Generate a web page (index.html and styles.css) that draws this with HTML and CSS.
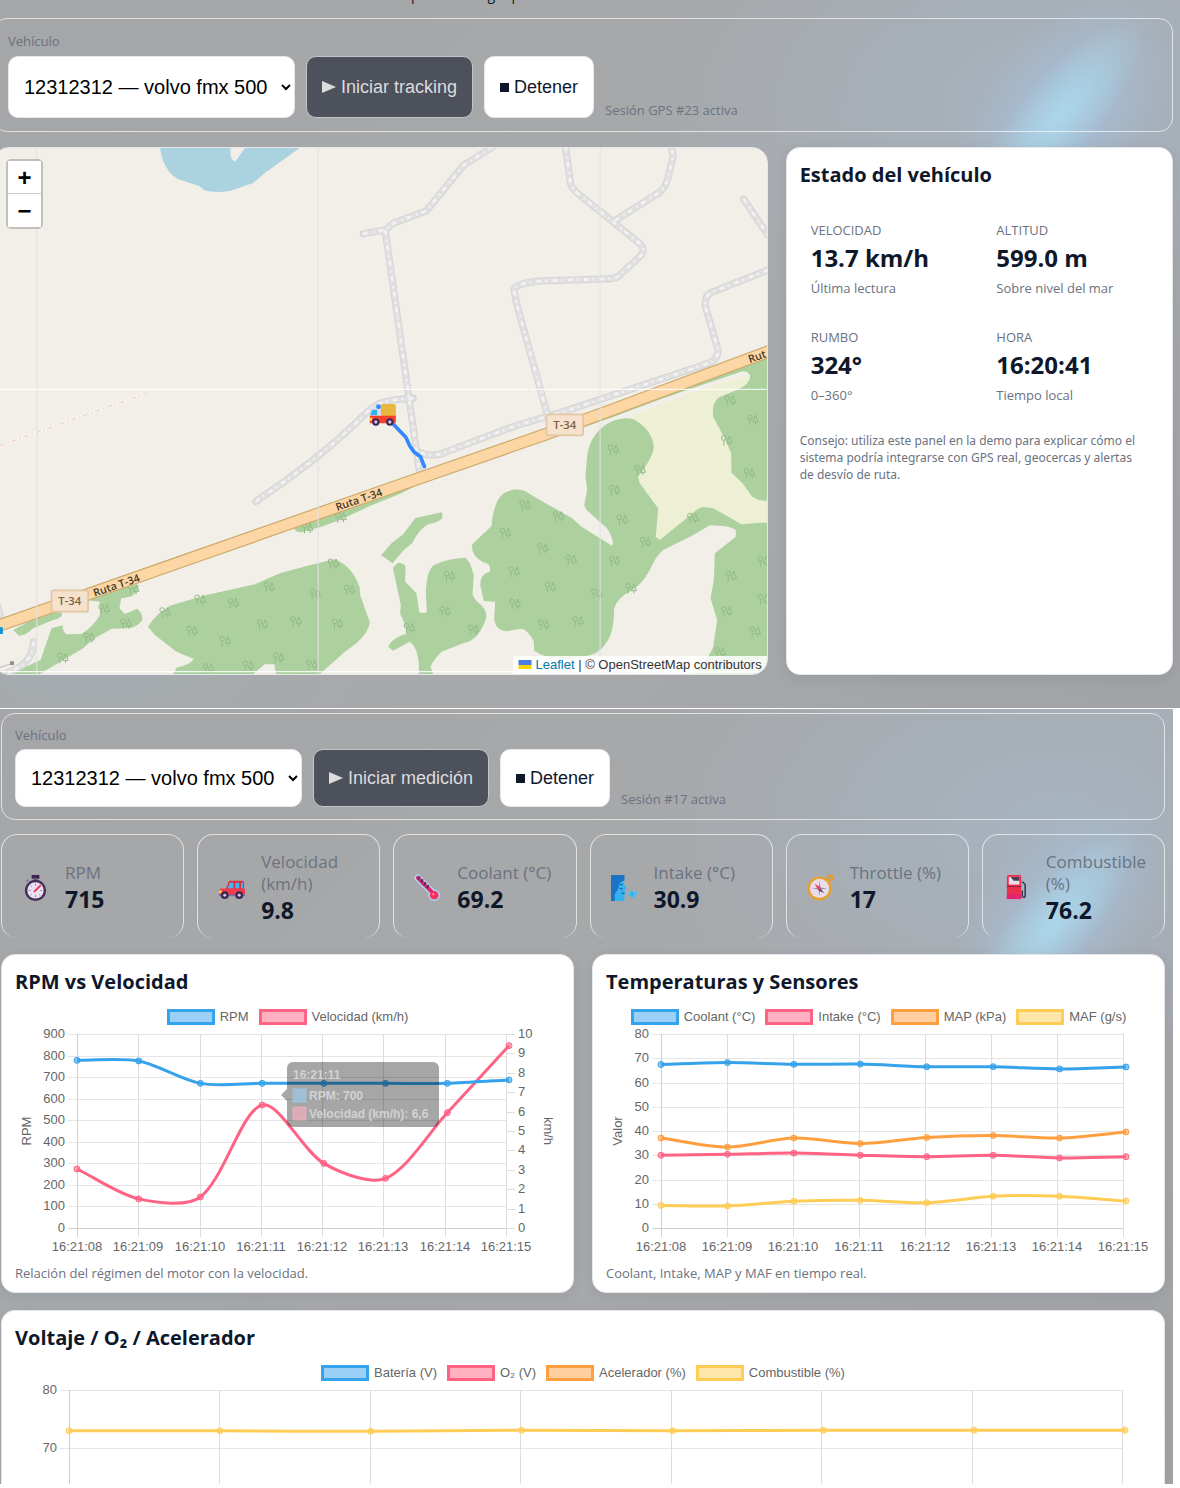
FILE: index.html
```
<!DOCTYPE html>
<html lang="es">

<head>
    <meta charset="UTF-8">
    <title>Monitoreo de vehículos</title>
    <link rel="stylesheet" href="styles.css">
</head>

<body>
    <!-- Panel GPS -->
    <section class="screen gps">
        <p class="intro">Tiempo real con geoposición</p>

        <form class="toolbar">
            <div class="field">
                <label for="gpsVehicle">Vehículo</label>
                <select id="gpsVehicle">
                    <option>12312312 — volvo fmx 500</option>
                </select>
            </div>
            <button type="button" class="btn btn-dark"><svg class="play" viewBox="0 0 14 14"><path d="M0 1L14 7L0 13Z"/></svg>Iniciar tracking</button>
            <button type="button" class="btn"><svg class="stop" viewBox="0 0 9 9"><path d="M0 0H9V9H0Z"/></svg>Detener</button>
            <span class="hint">Sesión GPS #23 activa</span>
        </form>

        <div class="gps-grid">
            <div class="map">
                <svg class="map-canvas" viewBox="-21 444 2325 1578" preserveAspectRatio="xMidYMid slice">
                    <defs>
                        <g id="tree">
                            <circle cx="-8" cy="-8" r="7"/>
                            <path d="M-8 -1V15M9 -15L1 6H17ZM9 6V14"/>
                        </g>
                        <path id="tracks" d="M1090 701L1156 690L1180 670L1280 632L1390 497L1480 440M1156 690L1258 1410M1240 1195Q1170 1198 1135 1212Q1110 1225 1070 1268Q940 1390 768 1504M1697 440L1712 550Q1717 568 1740 585L1925 735Q1935 750 1925 765L1860 825Q1850 835 1830 836L1620 843Q1535 852 1543 872L1550 910L1645 1252M1845 662L1975 580Q1995 565 2003 540L2020 470L2015 440M2231 597L2304 705M2304 810L2140 875Q2110 885 2118 925L2155 1050Q2155 1080 2125 1090L1700 1232L1540 1280L1340 1355Q1300 1375 1262 1358M101 1925Q100 1975 60 2000L20 2020M-10 1810L5 1860"/>
                    </defs>
                    <!-- agua -->
                    <path class="water" d="M480 440Q484 482 508 515Q520 530 535 538L598 558L614 571Q645 580 690 573L760 549L795 519L905 440H738L708 482Q695 488 692 460V440Z"/>
                    <!-- pradera -->
                    <path class="meadow" d="M1880 1255L2110 1165L2304 1110V1570L2225 1573L2130 1560L2000 1610L1975 1620L1964 1610L1940 1524L1900 1450V1245Z"/>
                    <!-- bosque -->
                    <g class="wood">
                        <path d="M2304 1068V1502Q2280 1505 2257 1490L2228 1450L2195 1418L2194 1360L2172 1310L2140 1250Q2135 1205 2160 1190L2210 1170Q2255 1150 2250 1125Q2240 1105 2210 1120L1990 1195L1830 1255L1790 1268L1640 1320L1480 1372L1300 1430L1200 1482L1110 1518L1020 1560L960 1582L905 1597Q885 1598 882 1582L1200 1465L1640 1305L1900 1215Z"/>
                        <path d="M1900 1257Q1960 1290 1962 1345Q1955 1380 1915 1430L1920 1450L1975 1525L1968 1610L1980 1620L2060 1555Q2095 1522 2110 1521L2140 1525L2225 1573L2304 1567V2022H2080Q2130 1970 2140 1940L2152 1860L2132 1795L2142 1740L2145 1660L2208 1610V1590Q2190 1577 2130 1576L2075 1608L1990 1650Q1970 1665 1950 1710Q1925 1755 1895 1772Q1855 1790 1843 1825Q1843 1900 1818 1930Q1795 1970 1730 1972Q1650 1985 1603 1952L1602 1925Q1585 1890 1565 1886L1520 1894Q1485 1890 1483 1855L1486 1805L1452 1803L1441 1755Q1442 1720 1470 1715Q1475 1690 1450 1687Q1415 1670 1416 1634L1475 1578Q1482 1500 1512 1480Q1540 1462 1575 1473L1625 1503L1715 1553L1745 1580L1837 1637Q1845 1620 1820 1583L1760 1530L1753 1515L1762 1470L1757 1430L1762 1365Q1775 1290 1840 1262Q1870 1250 1900 1257Z"/>
                        <path d="M1144 1666L1175 1630L1210 1603L1247 1554L1326 1537L1328 1552Q1320 1568 1287 1572Q1260 1582 1237 1630L1212 1650L1178 1690Z"/>
                        <path d="M1179 1703L1195 1688Q1215 1690 1217 1700L1216 1745L1250 1780L1258 1835Q1265 1842 1281 1837L1278 1780Q1280 1700 1310 1692Q1345 1675 1397 1673L1410 1690L1422 1725L1418 1785L1430 1803Q1460 1825 1460 1850Q1440 1920 1390 1930L1325 1955Q1300 1980 1292 2000L1300 2022H1257V1990Q1252 1940 1230 1925L1180 1952L1165 1940Q1175 1915 1222 1900Q1215 1870 1201 1840L1203 1815Z"/>
                        <path d="M444 1880Q470 1840 510 1817L620 1785L765 1753L840 1720Q930 1695 1005 1678Q1060 1700 1080 1765L1081 1785L1110 1867Q1105 1900 1070 1930L1030 1960L960 2022H828L824 1993H795L760 2022H520L530 2003Q570 1995 582 1977L530 1955L465 1905Z"/>
                        <path d="M30 2022L122 1980L155 1885L188 1876Q190 1900 202 1903L245 1902Q280 1880 300 1845V1805L260 1800Q350 1760 417 1755Q415 1785 385 1792L364 1795L359 1825L375 1842L412 1826Q430 1840 427 1860Q415 1880 390 1884L335 1886L280 1918L250 1945L120 2022Z"/>
                        <path d="M40 1890L160 1825L187 1840Q187 1855 160 1860L100 1885Q80 1905 58 1908Z"/>
                    </g>
                    <g class="trees" id="trees"></g>
                    <!-- huellas -->
                    <use href="#tracks" class="track-case"/>
                    <use href="#tracks" class="track-fill"/>
                    <use href="#tracks" class="track-dash"/>
                    <path class="path-case" d="M0 1337L200 1265L440 1179"/>
                    <path class="path-line" d="M0 1337L200 1265L440 1179"/>
                    <path class="wire" d="M0 2003L36 1990"/>
                    <path class="pole" d="M31 1984H42V1995H31Z"/>
                    <!-- ruta principal -->
                    <path class="road-case" d="M-30 1886L0 1876L530 1690L1200 1455L1640 1302L1830 1232L2310 1053"/>
                    <path class="road" d="M-30 1886L0 1876L530 1690L1200 1455L1640 1302L1830 1232L2310 1053"/>
                    <g class="road-name">
                        <text transform="translate(285 1790) rotate(-19)">Ruta T-34</text>
                        <text transform="translate(1012 1533) rotate(-19)">Ruta T-34</text>
                        <text transform="translate(2250 1089) rotate(-19)">Rut</text>
                    </g>
                    <g class="shield">
                        <rect x="155" y="1771" width="110" height="64" rx="6"/>
                        <text x="210" y="1816">T-34</text>
                        <rect x="1640" y="1243" width="110" height="63" rx="6"/>
                        <text x="1695" y="1288">T-34</text>
                    </g>
                    <path class="stop-mark" d="M-8 1882H9V1902H-8Z"/>
                    <!-- límites de tiles -->
                    <path class="seam" d="M111 444V2022M955 444V2022M1801 444V2022"/>
                    <path class="seam-light" d="M-21 1168H2304M-21 2015H2304"/>
                    <path class="route" d="M1135 1222L1180 1272L1218 1312L1230 1338L1242 1355L1262 1370L1270 1390L1274 1400"/>
                    <!-- camión -->
                    <g>
                        <rect x="1143" y="1212" width="45" height="44" rx="6" fill="#e8b93c"/>
                        <path d="M1118 1222H1143V1252H1111Z" fill="#e3dcee"/>
                        <path d="M1117 1229H1132V1246H1111Z" fill="#2fb4f0"/>
                        <path d="M1110 1247H1188V1266Q1188 1270 1184 1270H1110Z" fill="#f8402f"/>
                        <path d="M1110 1253H1117V1262H1110Z" fill="#ffd83a"/>
                        <circle cx="1128" cy="1266" r="11" fill="#3c2350"/>
                        <circle cx="1170" cy="1266" r="11" fill="#3c2350"/>
                        <circle cx="1128" cy="1266" r="5" fill="#cfc4dc"/>
                        <circle cx="1170" cy="1266" r="5" fill="#cfc4dc"/>
                        <circle cx="1136" cy="1220" r="7" fill="#3388ff"/>
                    </g>
                </svg>
                <div class="zoom">
                    <button type="button" aria-label="Acercar">+</button>
                    <button type="button" aria-label="Alejar">−</button>
                </div>
                <div class="attribution">
                    <svg class="flag" viewBox="0 0 13 9"><path fill="#4C7BE1" d="M0 0h13v5H0z"/><path fill="#FFD500" d="M0 5h13v4H0z"/></svg>
                    <a href="#">Leaflet</a> | © OpenStreetMap contributors
                </div>
            </div>

            <aside class="card status">
                <h2>Estado del vehículo</h2>
                <div class="metrics">
                    <div class="metric">
                        <span>VELOCIDAD</span>
                        <strong>13.7 km/h</strong>
                        <span>Última lectura</span>
                    </div>
                    <div class="metric">
                        <span>ALTITUD</span>
                        <strong>599.0 m</strong>
                        <span>Sobre nivel del mar</span>
                    </div>
                    <div class="metric">
                        <span>RUMBO</span>
                        <strong>324°</strong>
                        <span>0–360°</span>
                    </div>
                    <div class="metric">
                        <span>HORA</span>
                        <strong>16:20:41</strong>
                        <span>Tiempo local</span>
                    </div>
                </div>
                <p class="tip">Consejo: utiliza este panel en la demo para explicar cómo el sistema podría integrarse con GPS real, geocercas y alertas de desvío de ruta.</p>
            </aside>
        </div>
    </section>

    <!-- Panel OBD -->
    <section class="screen obd">
        <form class="toolbar toolbar-compact">
            <div class="field">
                <label for="obdVehicle">Vehículo</label>
                <select id="obdVehicle">
                    <option>12312312 — volvo fmx 500</option>
                </select>
            </div>
            <button type="button" class="btn btn-dark"><svg class="play" viewBox="0 0 14 14"><path d="M0 1L14 7L0 13Z"/></svg>Iniciar medición</button>
            <button type="button" class="btn"><svg class="stop" viewBox="0 0 9 9"><path d="M0 0H9V9H0Z"/></svg>Detener</button>
            <span class="hint">Sesión #17 activa</span>
        </form>

        <div class="stats">
            <div class="stat">
                <svg viewBox="0 0 28 28">
                    <path d="M10 1h8v4h-8z" fill="#3d2452"/><path d="M12 4h4v4h-4z" fill="#6b5a85"/>
                    <path d="M4.500 8l2-2" stroke="#8a7ba3" stroke-width="2"/>
                    <circle cx="14" cy="17" r="11" fill="#433058"/><circle cx="14" cy="17" r="8.500" fill="#e9e0f2"/>
                    <path d="M14 10v2M14 22v2M7 17h2M19 17h2M9 12l1 1M9 22l1-1M19 22l-1-1" stroke="#8a7ba3"/>
                    <path d="M13 18l6-6" stroke="#f0305a" stroke-width="2" stroke-linecap="round"/>
                </svg>
                <div><span>RPM</span><strong>715</strong></div>
            </div>
            <div class="stat">
                <svg viewBox="0 0 28 28">
                    <path d="M8 16l3-8q0-1 2-1h12q2 0 2 2v8z" fill="#e0303f"/>
                    <path d="M10 15l2-6h4v6zM18 9h4v6h-4zM24 9h2v6h-2z" fill="#45b4ee"/>
                    <path d="M1 17q0-2 3-2h23q1 0 1 2v5H1z" fill="#f23a4b"/>
                    <path d="M1 21h27v2H1z" fill="#8a6a9c"/><path d="M1 17h3v3H1z" fill="#ffcf3b"/>
                    <circle cx="7" cy="22" r="4" fill="#402753"/><circle cx="7" cy="22" r="1.500" fill="#d8cfe3"/>
                    <circle cx="22" cy="22" r="4" fill="#402753"/><circle cx="22" cy="22" r="1.500" fill="#d8cfe3"/>
                </svg>
                <div><span>Velocidad (km/h)</span><strong>9.8</strong></div>
            </div>
            <div class="stat">
                <svg viewBox="0 0 28 28" stroke-linecap="round">
                    <path d="M4 4L21 21" stroke="#a9d8fa" stroke-width="7"/><circle cx="21" cy="22" r="6" fill="#a9d8fa"/>
                    <path d="M4 4L20 20" stroke="#d92a6b" stroke-width="4"/><circle cx="21" cy="22" r="4.500" fill="#f92f60"/>
                    <path d="M6 3L4.500 5M9 6L7.500 8M12 9l-1.500 2M15 12l-1.500 2" stroke="#402753" stroke-width="1.500"/>
                    <circle cx="20" cy="21" r="1" fill="#ffa9bd"/>
                </svg>
                <div><span>Coolant (°C)</span><strong>69.2</strong></div>
            </div>
            <div class="stat">
                <svg viewBox="0 0 28 28">
                    <path d="M0 1h13v8l3 6-2 2 1 2-1 2v5q0 2-2 2H0z" fill="#35b1ee"/>
                    <path d="M0 1h14v6q-6 0-6 7-2 5-4 6v8H0z" fill="#1c72c4"/>
                    <path d="M9 11h3" stroke="#174a92"/><path d="M9 15q2 1 3 0M11 20h3" stroke="#174a92" fill="none"/>
                    <path d="M17 21q2-2 3-3 2-2 3 0 4-1 4 2 1 1-1 2 0 3-3 2-2 2-3-1z" fill="#4bbcf0"/><circle cx="22" cy="21" r="1" fill="#2a8ed8"/>
                </svg>
                <div><span>Intake (°C)</span><strong>30.9</strong></div>
            </div>
            <div class="stat">
                <svg viewBox="0 0 28 28">
                    <circle cx="24" cy="4" r="2.500" fill="none" stroke="#e59a24" stroke-width="2"/>
                    <circle cx="13" cy="15" r="12.500" fill="#e8a030"/><circle cx="13" cy="15" r="10" fill="#e8ddea"/>
                    <path d="M13 7l1 7 7 1-7 1-1 7-1-7-7-1 7-1z" fill="#9d91a8"/>
                    <path d="M8 10l6 4-2 3z" fill="#f0305a"/><path d="M18 20l-4-5-2 2z" fill="#594b68"/>
                </svg>
                <div><span>Throttle (%)</span><strong>17</strong></div>
            </div>
            <div class="stat">
                <svg viewBox="0 0 28 28">
                    <path d="M20 8l3 3v12q-1 3-3 0v-6" fill="none" stroke="#38304a" stroke-width="1.500"/>
                    <path d="M4 3q0-2 2-2h11q2 0 2 2v23H4z" fill="#ed2f4e"/><path d="M4 21h15v5H4z" fill="#e2266d"/>
                    <path d="M6 3h11v8H6z" fill="#e6deec"/><path d="M8 3h9v4h-6z" fill="#4a3d59"/>
                    <path d="M4 13h15" stroke="#8f1e42"/><path d="M2 26h19v2H2z" fill="#b8aac4"/>
                </svg>
                <div><span>Combustible (%)</span><strong>76.2</strong></div>
            </div>
        </div>

        <div class="charts">
            <article class="card chart">
                <h2>RPM vs Velocidad</h2>
                <ul class="legend">
                    <li class="blue">RPM</li>
                    <li class="pink">Velocidad (km/h)</li>
                </ul>
                <svg class="plot" id="chartRpm"></svg>
                <p class="caption">Relación del régimen del motor con la velocidad.</p>
            </article>
            <article class="card chart">
                <h2>Temperaturas y Sensores</h2>
                <ul class="legend">
                    <li class="blue">Coolant (°C)</li>
                    <li class="pink">Intake (°C)</li>
                    <li class="orange">MAP (kPa)</li>
                    <li class="yellow">MAF (g/s)</li>
                </ul>
                <svg class="plot" id="chartTemp"></svg>
                <p class="caption">Coolant, Intake, MAP y MAF en tiempo real.</p>
            </article>
            <article class="card chart chart-wide">
                <h2>Voltaje / O₂ / Acelerador</h2>
                <ul class="legend">
                    <li class="blue">Batería (V)</li>
                    <li class="pink">O₂ (V)</li>
                    <li class="orange">Acelerador (%)</li>
                    <li class="yellow">Combustible (%)</li>
                </ul>
                <svg class="plot plot-short" id="chartVolt"></svg>
            </article>
        </div>
    </section>

    <script src="charts.js"></script>
</body>

</html>
```
FILE: styles.css
```
*,
*::before,
*::after {
    box-sizing: border-box;
}

body {
    margin: 0;
    background: #fff;
    color: #0f172a;
    font-family: "Segoe UI", "Open Sans", "Noto Sans", sans-serif;
    font-size: 13px;
}

h2,
p,
ul {
    margin: 0;
    padding: 0;
}

.screen {
    position: relative;
    overflow: hidden;
    isolation: isolate;
    background:
        radial-gradient(ellipse 420px 260px at 90% 15%, rgba(165, 190, 212, 0.5), transparent),
        radial-gradient(ellipse 300px 200px at 8% 88%, rgba(160, 178, 186, 0.4), transparent),
        linear-gradient(135deg, #a5a6a8, #a8a9ab 60%, #a1a3a7);
}

/* haz de luz del fondo */
.screen::before,
.screen::after {
    content: "";
    position: absolute;
    z-index: -1;
    width: 270px;
    height: 160px;
    right: -20px;
    top: 30px;
    background: radial-gradient(closest-side, rgba(166, 196, 230, 0.75), transparent);
    transform: rotate(-50deg);
}

.screen::after {
    width: 240px;
    height: 80px;
    right: 0;
    top: 75px;
    background: radial-gradient(closest-side, rgba(172, 220, 236, 0.8), transparent);
}

.gps {
    padding: 0 7px 33px 0;
    border-bottom: 1px solid #fff;
}

.gps .toolbar,
.gps-grid {
    margin-left: -7px;
}

.obd {
    margin: 0 7px 4px 0;
    padding: 4px 8px 0 1px;
}

.obd::before {
    top: 130px;
}

.obd::after {
    top: 175px;
}

.intro {
    margin: -16px 0 12px 379px;
    font-size: 14px;
    line-height: 22px;
}

/* barra de controles */
.toolbar {
    display: flex;
    align-items: flex-end;
    gap: 11px;
    padding: 13px 14px;
    border: 1px solid rgba(255, 255, 255, 0.65);
    border-radius: 14px;
}

.field {
    display: flex;
    flex-direction: column;
    gap: 6px;
}

.field label,
.hint {
    color: #6b7280;
    line-height: 18px;
}

.hint {
    line-height: 16px;
}

.field select {
    width: 287px;
    height: 62px;
    padding: 0 0 0 11px;
    border: 1px solid #e5e7eb;
    border-radius: 10px;
    background: #fff;
    color: #000;
    font: 20px "Liberation Sans", Arial, sans-serif;
}

.btn {
    display: flex;
    align-items: center;
    gap: 5px;
    height: 62px;
    padding: 0 15px;
    border: 1px solid #e5e7eb;
    border-radius: 10px;
    background: #fff;
    color: #0f172a;
    font: 18px "Liberation Sans", Arial, sans-serif;
}

.btn-dark {
    border-color: #c3c5c9;
    background: #4d515c;
    color: #dcdcdc;
}

.btn svg {
    fill: currentColor;
}

.play {
    width: 14px;
    height: 14px;
}

.stop {
    width: 9px;
    height: 9px;
}

.toolbar-compact {
    padding: 12px 13px;
}

.toolbar-compact .field {
    gap: 5px;
}

.toolbar-compact select,
.toolbar-compact .btn {
    height: 58px;
}

/* mapa + estado */
.gps-grid {
    display: grid;
    grid-template-columns: 2fr 1fr;
    gap: 18px;
    margin-top: 15px;
}

.map {
    position: relative;
    height: 528px;
    overflow: hidden;
    border: 1px solid #e5e7eb;
    border-radius: 16px;
    background: #f2efe9;
}

.map-canvas {
    display: block;
    width: 100%;
    height: 100%;
    fill: none;
}

.water { fill: #aad3df; }
.meadow { fill: #eef0d5; }
.wood { fill: #add19e; }

.trees {
    stroke: #93b987;
    stroke-width: 3;
}

.track-case,
.track-fill,
.track-dash {
    stroke: #d2d2d2;
    stroke-width: 21;
    stroke-linecap: round;
    stroke-linejoin: round;
}

.track-fill {
    stroke: #e0e0e0;
    stroke-width: 16;
}

.track-dash {
    stroke: #f2f2f4;
    stroke-width: 8;
    stroke-linecap: butt;
    stroke-dasharray: 14 16 5 12;
}

.path-case {
    stroke: #f8f5f2;
    stroke-width: 9;
}

.path-line {
    stroke: #efd3cd;
    stroke-width: 4;
    stroke-dasharray: 16 8 6 8;
}

.road-case {
    stroke: #cda869;
    stroke-width: 38;
}

.road {
    stroke: #fcd6a4;
    stroke-width: 31;
}

.road-name {
    fill: #40372c;
    font-size: 32px;
    font-weight: 600;
}

.shield rect {
    fill: #f5e1cc;
    stroke: #e2c5a1;
    stroke-width: 5;
}

.shield text {
    fill: #7b6243;
    font-size: 34px;
    font-weight: 600;
    text-anchor: middle;
}

.stop-mark { fill: #0a8fd8; }
.pole { fill: #8d8a87; }

.wire {
    stroke: #bbb;
    stroke-width: 3;
}

.seam {
    stroke: #e3e2e2;
    stroke-width: 3;
}

.seam-light {
    stroke: #fff;
    stroke-width: 3;
}

.route {
    stroke: #3388ff;
    stroke-width: 11;
    stroke-linecap: round;
    stroke-linejoin: round;
}

.zoom {
    position: absolute;
    top: 11px;
    left: 12px;
    border: 2px solid rgba(0, 0, 0, 0.2);
    border-radius: 5px;
    background-clip: padding-box;
}

.zoom button {
    display: block;
    width: 33px;
    height: 33px;
    padding: 0;
    border: 0;
    background: #fff;
    color: #000;
    font: bold 24px/33px "Liberation Sans", Arial, sans-serif;
}

.zoom button:first-child {
    border-bottom: 1px solid #ccc;
}

.attribution {
    position: absolute;
    right: 0;
    bottom: 0;
    padding: 0 5px;
    background: rgba(255, 255, 255, 0.85);
    color: #333;
    font: 13px/18px "Liberation Sans", Arial, sans-serif;
}

.attribution a {
    color: #0078a8;
    text-decoration: none;
}

.flag {
    width: 14px;
    height: 9px;
}

.card {
    padding: 13px;
    border: 1px solid #e5e7eb;
    border-radius: 14px;
    background: #fff;
    box-shadow: 0 4px 14px rgba(15, 23, 42, 0.08);
}

.card h2 {
    font-size: 20px;
    line-height: 27px;
}

.metrics {
    display: grid;
    grid-template-columns: 1fr 1fr;
    gap: 12px;
    margin: 21px 0;
}

.metric {
    display: flex;
    flex-direction: column;
    padding: 12px 11px 7px;
    color: #6b7280;
    line-height: 18px;
}

.metric strong {
    margin: 3px 0 5px;
    color: #0f172a;
    font-size: 24px;
    line-height: 32px;
}

.tip {
    padding-right: 12px;
    color: #6b7280;
    font-family: "Segoe UI", "Noto Sans", sans-serif;
    font-size: 12px;
    line-height: 17px;
}

/* indicadores */
.stats {
    display: grid;
    grid-template-columns: repeat(6, 1fr);
    gap: 13px;
    margin: 14px 0 16px;
}

.stat {
    display: flex;
    align-items: center;
    gap: 16px;
    min-height: 104px;
    padding: 15px 10px 13px 20px;
    border: 1px solid rgba(255, 255, 255, 0.65);
    border-bottom: 0;
    border-radius: 16px;
    color: #6b7280;
    font-size: 17px;
    line-height: 22px;
}

.stat svg {
    flex: none;
    width: 27px;
    height: 27px;
}

.stat span,
.stat strong {
    display: block;
}

.stat strong {
    color: #0f172a;
    font-size: 23px;
    line-height: 30px;
}

/* gráficos */
.charts {
    display: grid;
    grid-template-columns: 1fr 1fr;
    gap: 17px 18px;
}

.chart {
    padding-bottom: 10px;
}

.chart-wide {
    grid-column: 1 / -1;
    padding-bottom: 0;
    border-bottom: 0;
    border-radius: 14px 14px 0 0;
}

.legend {
    display: flex;
    justify-content: center;
    gap: 10px;
    margin-top: 14px;
    color: #666;
    font: 13px/16px "Liberation Sans", Arial, sans-serif;
    list-style: none;
}

.legend li {
    display: flex;
    align-items: center;
    gap: 5px;
    white-space: nowrap;
}

.legend li::before {
    content: "";
    width: 48px;
    height: 16px;
    border-width: 3px;
    border-style: solid;
}

.legend .blue::before { border-color: #36a2eb; background: #9ad0f5; }
.legend .pink::before { border-color: #ff6384; background: #ffb1c1; }
.legend .orange::before { border-color: #ff9f40; background: #ffcf9f; }
.legend .yellow::before { border-color: #ffcd56; background: #ffe6aa; }

.plot {
    display: block;
    width: 100%;
    height: 230px;
    overflow: hidden;
    font: 13px "Liberation Sans", Arial, sans-serif;
}

.plot-short {
    height: 103px;
}

.plot text {
    fill: #666;
}

.plot .tip-text {
    fill: #d2d2d2;
    font-weight: bold;
    font-size: 12px;
}

.caption {
    margin-top: 9px;
    color: #6b7280;
    line-height: 18px;
}
```
FILE: charts.js
```
const BLUE = ['#36a2eb', '#9ad0f5'];
const PINK = ['#ff6384', '#ffb1c1'];
const ORANGE = ['#ff9f40', '#ffcf9f'];
const YELLOW = ['#ffcd56', '#ffe6aa'];

const times = ['16:21:08', '16:21:09', '16:21:10', '16:21:11', '16:21:12', '16:21:13', '16:21:14', '16:21:15'];

const charts = [
    {
        id: 'chartRpm', left: 62, right: 54, height: 194, max: 900, step: 100, title: 'RPM',
        right2: { max: 10, step: 1, title: 'km/h' },
        series: [
            { color: PINK, max: 10, data: [3.04, 1.5, 1.6, 6.34, 3.33, 2.56, 5.94, 9.4] },
            { color: BLUE, data: [778, 775, 671, 671, 671, 671, 671, 687] }
        ],
        tooltip: { index: 3, title: '16:21:11', rows: [[BLUE, 'RPM: 700'], [PINK, 'Velocidad (km/h): 6,6']] }
    },
    {
        id: 'chartTemp', left: 55, right: 28, height: 194, max: 80, step: 10, title: 'Valor',
        series: [
            { color: YELLOW, data: [9.3, 9.1, 11, 11.4, 10.4, 13.1, 13.1, 11.1] },
            { color: ORANGE, data: [37.1, 33.4, 37.1, 34.8, 37.3, 38.1, 37.1, 39.6] },
            { color: PINK, data: [30, 30.4, 30.9, 30, 29.4, 30, 28.9, 29.4] },
            { color: BLUE, data: [67.4, 68.2, 67.5, 67.6, 66.5, 66.5, 65.6, 66.4] }
        ]
    },
    {
        id: 'chartVolt', left: 54, right: 29, height: 466, max: 80, min: 70, step: 10,
        series: [
            { color: YELLOW, data: [73, 73, 72.9, 73.1, 73, 73.1, 73.1, 73.1] }
        ]
    }
];

// curva suavizada con tensión 0.3
function curve(pts) {
    const ctrl = pts.map((p, i) => {
        const a = pts[i - 1] || p;
        const b = pts[i + 1] || p;
        const d1 = Math.hypot(p[0] - a[0], p[1] - a[1]);
        const d2 = Math.hypot(b[0] - p[0], b[1] - p[1]);
        const f1 = 0.3 * d1 / (d1 + d2);
        const f2 = 0.3 * d2 / (d1 + d2);
        const dx = b[0] - a[0];
        const dy = b[1] - a[1];
        return [[p[0] - f1 * dx, p[1] - f1 * dy], [p[0] + f2 * dx, p[1] + f2 * dy]];
    });
    let d = `M${pts[0]}`;
    for (let i = 1; i < pts.length; i++) {
        d += `C${ctrl[i - 1][1]} ${ctrl[i][0]} ${pts[i]}`;
    }
    return d;
}

function draw(c) {
    const svg = document.getElementById(c.id);
    const top = 9;
    const bottom = top + c.height;
    const width = svg.clientWidth;
    const x1 = width - c.right;
    const gap = (x1 - c.left) / (times.length - 1);
    // los puntos se estiran un poco más que la cuadrícula
    const pointGap = (x1 - c.left + 3) / (times.length - 1);
    const mid = (top + bottom) / 2;
    let out = '';

    // cuadrícula y ejes
    for (let v = c.min || 0; v <= c.max; v += c.step) {
        const y = Math.round(bottom - v / c.max * c.height);
        out += `<path d="M${c.left - 9} ${y + 0.5}H${x1}" stroke="${v ? '#e5e5e5' : '#cfcfcf'}"/>`;
        out += `<text x="${c.left - 12}" y="${y + 4}" text-anchor="end">${v}</text>`;
    }
    times.forEach((t, i) => {
        const x = Math.round(c.left + i * gap);
        out += `<path d="M${x + 0.5} ${top}V${bottom + 9}" stroke="${i ? '#dedede' : '#cfcfcf'}"/>`;
        if (!c.min) {
            out += `<text x="${x}" y="${bottom + 23}" text-anchor="middle">${t}</text>`;
        }
    });
    if (c.right2) {
        for (let v = 0; v <= c.right2.max; v += c.right2.step) {
            const y = Math.round(bottom - v / c.right2.max * c.height);
            out += `<path d="M${x1} ${y + 0.5}h9" stroke="#dedede"/>`;
            out += `<text x="${x1 + 12}" y="${y + 4}">${v}</text>`;
        }
        out += `<text transform="translate(${x1 + 38} ${mid}) rotate(90)" text-anchor="middle">${c.right2.title}</text>`;
    }
    if (c.title) {
        out += `<text transform="translate(16 ${mid}) rotate(-90)" text-anchor="middle">${c.title}</text>`;
    }

    // líneas
    c.series.forEach(s => {
        const pts = s.data.map((v, i) => [c.left + i * pointGap, bottom - v / (s.max || c.max) * c.height]);
        out += `<path d="${curve(pts)}" fill="none" stroke="${s.color[0]}" stroke-width="3"/>`;
        pts.forEach(p => {
            out += `<circle cx="${p[0]}" cy="${p[1]}" r="3" fill="${s.color[0]}" fill-opacity="0.6" stroke="${s.color[0]}"/>`;
        });
    });

    if (c.tooltip) {
        const x = Math.round(c.left + c.tooltip.index * gap) + 26;
        const y = top + 28;
        out += `<rect x="${x}" y="${y}" width="152" height="65" rx="6" fill="#000" fill-opacity="0.35"/>`;
        out += `<path d="M${x} ${y + 27}l-6 6l6 6z" fill="#000" fill-opacity="0.35"/>`;
        out += `<text class="tip-text" x="${x + 6}" y="${y + 17}">${c.tooltip.title}</text>`;
        c.tooltip.rows.forEach((r, i) => {
            const ry = y + 27 + i * 18;
            out += `<rect x="${x + 6}" y="${ry}" width="13" height="13" fill="${r[0][1]}" fill-opacity="0.6" stroke="${r[0][1]}" stroke-opacity="0.6"/>`;
            out += `<text class="tip-text" x="${x + 22}" y="${ry + 11}">${r[1]}</text>`;
        });
    }
    svg.innerHTML = out;
}

// símbolos de árbol del mapa
const trees = [
    [807, 1762], [600, 1800], [700, 1810], [945, 1782], [1048, 1770], [1000, 1692], [495, 1838], [575, 1894],
    [787, 1874], [888, 1865], [1012, 1872], [675, 1924], [835, 1974], [745, 1998], [625, 2006], [935, 1995],
    [312, 1828], [267, 1914], [188, 1975], [400, 1768], [378, 1872], [1575, 1517], [1675, 1550], [1516, 1600],
    [1628, 1646], [1713, 1680], [1542, 1716], [1651, 1762], [1790, 1782], [1545, 1812], [1631, 1875], [1734, 1865],
    [1348, 1729], [1335, 1835], [1420, 1890], [1840, 1350], [1843, 1471], [1867, 1560], [1936, 1627], [1843, 1684],
    [1893, 1766], [2258, 1260], [2180, 1322], [2248, 1421], [2193, 1729], [2180, 1835], [2265, 1895], [2290, 1684],
    [2290, 1798], [2078, 1555], [1228, 1885], [2190, 1202], [1920, 1411], [2160, 1958], [922, 1585], [1022, 1553]
];
document.getElementById('trees').innerHTML = trees.map(t => `<use href="#tree" x="${t[0]}" y="${t[1]}"/>`).join('');

function drawAll() {
    charts.forEach(draw);
}

window.addEventListener('resize', drawAll);
drawAll();
```
